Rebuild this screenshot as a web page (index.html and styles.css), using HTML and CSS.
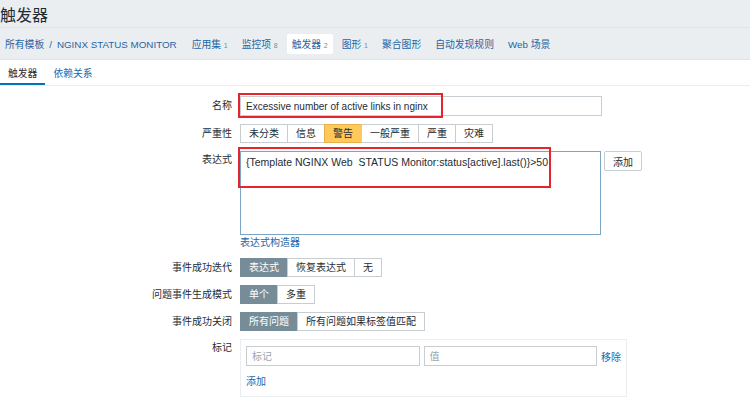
FILE: index.html
```html
<!DOCTYPE html>
<html lang="zh">
<head>
    <meta charset="UTF-8">
    <title>触发器</title>
    <link rel="stylesheet" href="styles.css">
</head>
<body>

<div class="head">
    <h1>触发器</h1>
    <div class="crumbs">
        <a class="crumb" href="#">所有模板</a>
        <span class="sep">/</span>
        <a class="crumb upper" href="#">NGINX STATUS MONITOR</a>
        <a class="item" href="#">应用集 <sup>1</sup></a>
        <a class="item" href="#">监控项 <sup>8</sup></a>
        <a class="item current" href="#">触发器 <sup>2</sup></a>
        <a class="item" href="#">图形 <sup>1</sup></a>
        <a class="item" href="#">聚合图形</a>
        <a class="item" href="#">自动发现规则</a>
        <a class="item" href="#">Web 场景</a>
    </div>
</div>

<div class="tabs">
    <span class="tab active">触发器</span>
    <a class="tab" href="#">依赖关系</a>
</div>

<div class="form">
    <label class="lbl">名称</label>
    <div class="field">
        <div class="marked">
            <input class="text wide" type="text" value="Excessive number of active links in nginx">
            <span class="mark mark-name"></span>
        </div>
    </div>

    <label class="lbl">严重性</label>
    <div class="field">
        <div class="seg">
            <span>未分类</span><span>信息</span><span class="warn">警告</span><span>一般严重</span><span>严重</span><span>灾难</span>
        </div>
    </div>

    <label class="lbl lbl-top">表达式</label>
    <div class="field">
        <div class="expr-row">
            <div class="marked">
                <textarea class="expr">{Template NGINX Web  STATUS Monitor:status[active].last()}&gt;50</textarea>
                <span class="mark mark-expr"></span>
            </div>
            <button class="btn">添加</button>
        </div>
        <a class="link builder" href="#">表达式构造器</a>
    </div>

    <label class="lbl">事件成功迭代</label>
    <div class="field">
        <div class="seg">
            <span class="on">表达式</span><span>恢复表达式</span><span>无</span>
        </div>
    </div>

    <label class="lbl">问题事件生成模式</label>
    <div class="field">
        <div class="seg">
            <span class="on">单个</span><span>多重</span>
        </div>
    </div>

    <label class="lbl">事件成功关闭</label>
    <div class="field">
        <div class="seg">
            <span class="on">所有问题</span><span>所有问题如果标签值匹配</span>
        </div>
    </div>

    <label class="lbl lbl-top">标记</label>
    <div class="field">
        <div class="tags">
            <div class="tag-row">
                <input class="text tag" type="text" placeholder="标记">
                <input class="text tag" type="text" placeholder="值">
                <a class="link" href="#">移除</a>
            </div>
            <a class="link" href="#">添加</a>
        </div>
    </div>
</div>

</body>
</html>
```

FILE: styles.css
```css
body {
    margin: 0;
    font-family: "Liberation Sans", Arial, "Noto Sans CJK SC", sans-serif;
    font-size: 10px;
    color: #1f2c33;
    background: #fff;
}
a { color: #1f65a6; text-decoration: none; }

.head {
    background: #ebeef0;
    border-bottom: 1px solid #dfe4e7;
    height: 59px;
}
h1 {
    margin: 0;
    padding: 2px 0 0 0;
    height: 25px;
    font-size: 16px;
    font-weight: normal;
    color: #1f2c33;
    border-bottom: 1px solid #e0e4e7;
}
.crumbs {
    display: flex;
    align-items: center;
    height: 32px;
    padding-left: 5px;
    font-size: 9.8px;
}
.sep { color: #1f65a6; margin: 0 5px; }
.upper { margin-right: 10px; }
.item {
    padding: 3px 5px;
    margin-right: 4px;
    border-radius: 2px;
    white-space: nowrap;
}
.item sup {
    font-size: 7px;
    color: #768d99;
    vertical-align: baseline;
}
.item.current { background: #fff; }

.tabs {
    display: flex;
    height: 25px;
    border-bottom: 1px solid #ebeef0;
    font-size: 9.8px;
}
.tab { padding: 6px 8px 0 8px; }
.tab.active {
    color: #1f2c33;
    border-bottom: 2px solid #0275b8;
}

.form {
    display: grid;
    grid-template-columns: 232px 1fr;
    column-gap: 8px;
    row-gap: 8px;
    margin-top: 10px;
}
.lbl {
    text-align: right;
    line-height: 19px;
    white-space: nowrap;
}
.lbl-top { line-height: 18px; }
.field { display: flex; flex-direction: column; align-items: flex-start; }

.text {
    box-sizing: border-box;
    height: 20px;
    border: 1px solid #c7cdd1;
    padding: 0 5px;
    font-family: inherit;
    font-size: 10px;
    color: #1f2c33;
    background: #fff;
}
.wide { width: 362px; }
.text::placeholder { color: #9aa5ab; }

.marked { position: relative; }
.mark {
    position: absolute;
    border: 2px solid #e4252f;
    pointer-events: none;
}
.mark-name { left: -2px; top: -3px; width: 201px; height: 21px; }
.mark-expr { left: -2px; top: -4px; width: 309px; height: 37px; }

.seg { display: flex; }
.seg span {
    height: 17px;
    line-height: 17px;
    padding: 0 8px;
    border: 1px solid #c7cdd1;
    margin-left: -1px;
    background: #fff;
    white-space: nowrap;
}
.seg span:first-child { margin-left: 0; }
.seg .warn { background: #ffc859; border-color: #e6b04c; }
.seg .on { background: #768d99; border-color: #768d99; color: #fff; }

.seg-small span { height: 16px; line-height: 16px; }

.expr-row { display: flex; gap: 3px; }
.expr {
    box-sizing: border-box;
    width: 361px;
    height: 84px;
    border: 1px solid #7ba5c4;
    padding: 4px 5px;
    font-family: inherit;
    font-size: 10.5px;
    color: #1f2c33;
    resize: none;
    display: block;
}
.btn {
    height: 20px;
    padding: 0 8px;
    border: 1px solid #c7cdd1;
    border-radius: 2px;
    background: #fff;
    font-family: inherit;
    font-size: 10px;
    color: #1f2c33;
}
.builder { margin-top: 1px; line-height: 14px; }

.tags {
    box-sizing: border-box;
    width: 387px;
    height: 58px;
    border: 1px solid #ebeef0;
    padding: 6px 5px 0 5px;
}
.tag-row {
    display: flex;
    align-items: center;
    gap: 4px;
    margin-bottom: 7px;
    white-space: nowrap;
}
.tag { width: 174px; }
```
